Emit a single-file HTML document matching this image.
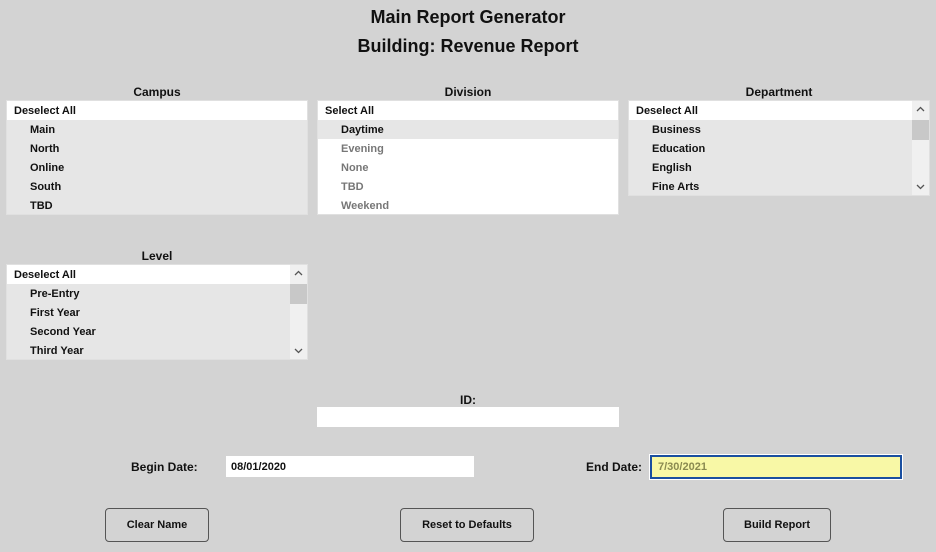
<!DOCTYPE html>
<html><head><style>
*{margin:0;padding:0;box-sizing:border-box}
body{width:936px;height:552px;background:#d3d3d3;font-family:"Liberation Sans",Arial,sans-serif;font-weight:bold;color:#111;position:relative;overflow:hidden}
.a{position:absolute}
.t{font-size:18px;text-align:center;width:936px;left:0}
.h{font-size:12px;text-align:center}
.box{position:absolute;background:#e6e6e6;border:1px solid #e0e0e0;overflow:hidden}
.r{height:19px;line-height:21px;font-size:11px;padding-left:7px;white-space:nowrap}
.r.w{background:#fff}
.r.i{padding-left:23px}
.g{color:#777}
.sb{position:absolute;right:0;top:0;width:17px;height:100%;background:#f0f0f0}
.th{position:absolute;left:0;top:19px;width:17px;height:20px;background:#c8c8c8}
.sb svg{position:absolute;left:4px}
.lbl{font-size:12px}
.in{position:absolute;background:#fff;font-size:11px;padding-left:5px;line-height:21px}
.btn{position:absolute;border:1px solid #555;border-radius:4px;font-size:11px;text-align:center;line-height:33px;height:34px}
</style></head><body>
<div class="a t" style="top:7px">Main Report Generator</div>
<div class="a t" style="top:36px">Building: Revenue Report</div>

<div class="a h" style="left:6px;width:302px;top:85px">Campus</div>
<div class="box" style="left:6px;top:100px;width:302px;height:115px">
<div class="r w">Deselect All</div><div class="r i">Main</div><div class="r i">North</div><div class="r i">Online</div><div class="r i">South</div><div class="r i">TBD</div></div>

<div class="a h" style="left:317px;width:302px;top:85px">Division</div>
<div class="box" style="left:317px;top:100px;width:302px;height:115px;background:#fff">
<div class="r w">Select All</div><div class="r i" style="background:#e6e6e6">Daytime</div><div class="r i g">Evening</div><div class="r i g">None</div><div class="r i g">TBD</div><div class="r i g">Weekend</div></div>

<div class="a h" style="left:628px;width:302px;top:85px">Department</div>
<div class="box" style="left:628px;top:100px;width:302px;height:96px">
<div class="r w" style="margin-right:17px">Deselect All</div><div class="r i">Business</div><div class="r i">Education</div><div class="r i">English</div><div class="r i">Fine Arts</div>
<div class="sb"><div class="th"></div>
<svg style="top:5px" width="9" height="6"><path d="M1 5L4.5 1.5L8 5" stroke="#555" stroke-width="1.3" fill="none"/></svg>
<svg style="bottom:5px" width="9" height="6"><path d="M1 1L4.5 4.5L8 1" stroke="#555" stroke-width="1.3" fill="none"/></svg></div></div>

<div class="a h" style="left:6px;width:302px;top:249px">Level</div>
<div class="box" style="left:6px;top:264px;width:302px;height:96px">
<div class="r w" style="margin-right:17px">Deselect All</div><div class="r i">Pre-Entry</div><div class="r i">First Year</div><div class="r i">Second Year</div><div class="r i">Third Year</div>
<div class="sb"><div class="th"></div>
<svg style="top:5px" width="9" height="6"><path d="M1 5L4.5 1.5L8 5" stroke="#555" stroke-width="1.3" fill="none"/></svg>
<svg style="bottom:5px" width="9" height="6"><path d="M1 1L4.5 4.5L8 1" stroke="#555" stroke-width="1.3" fill="none"/></svg></div></div>

<div class="a h" style="left:317px;width:302px;top:393px">ID:</div>
<div class="in" style="left:317px;top:407px;width:302px;height:20px"></div>

<div class="a lbl" style="left:131px;top:460px">Begin Date:</div>
<div class="in" style="left:226px;top:456px;width:248px;height:21px;line-height:22px">08/01/2020</div>
<div class="a lbl" style="left:586px;top:460px">End Date:</div>
<div class="in" style="left:650px;top:455px;width:252px;height:24px;background:#f8f8a6;border:2px solid #1a4fa0;outline:1px solid #fff;color:#8a8a50;line-height:21px;padding-left:6px">7/30/2021</div>

<div class="btn" style="left:105px;top:508px;width:104px">Clear Name</div>
<div class="btn" style="left:400px;top:508px;width:134px">Reset to Defaults</div>
<div class="btn" style="left:723px;top:508px;width:108px">Build Report</div>
</body></html>
